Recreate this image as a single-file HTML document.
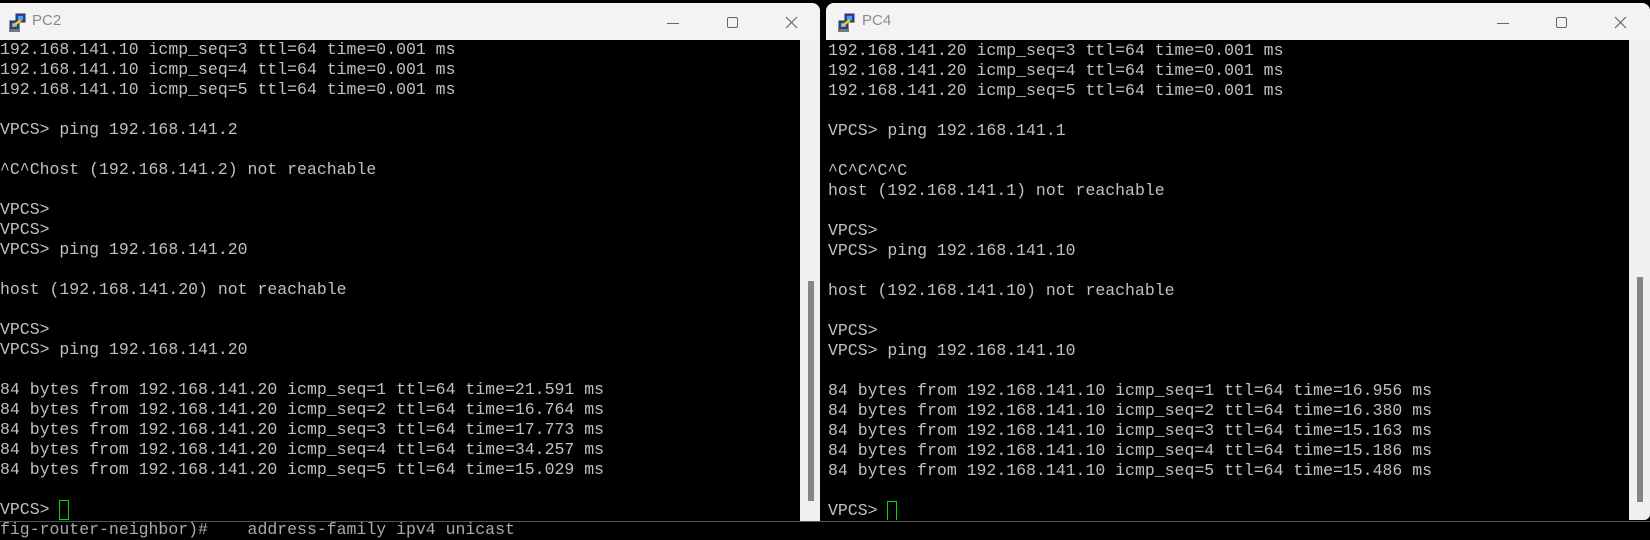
<!DOCTYPE html>
<html><head><meta charset="utf-8"><style>
*{margin:0;padding:0;box-sizing:border-box}
body{width:1650px;height:527px;background:#000;position:relative;overflow:hidden;font-family:"Liberation Mono",monospace}
.win{position:absolute;background:#f0f0f0;overflow:hidden}
.title{position:absolute;left:0;top:0;right:0;height:37px;background:#f3f3f3}
.title .t{position:absolute;left:32px;top:9px;font:15px "Liberation Sans",sans-serif;color:#8a8a8a}
.term{position:absolute;left:0;top:37px;background:#000;overflow:hidden}
pre{font-family:"Liberation Mono",monospace;font-size:16.5px;line-height:20px;color:#c0c0c0;white-space:pre;position:absolute;left:0;top:0}
.thumb{position:absolute;background:#858585;width:6px}
.cur{display:inline-block;width:10px;height:20px;border:1.5px solid #00e000;vertical-align:top}
.ctl{position:absolute;top:12px}
</style></head><body>
<div style="position:absolute;left:0;top:521px;width:1650px;height:1px;background:#555"></div>
<pre style="top:520px;left:0;color:#aaa">fig-router-neighbor)#    address-family ipv4 unicast</pre>

<div class="win" style="left:0;top:3px;width:820px;height:518px;border-top-right-radius:8px">
 <div class="title">
  <svg style="position:absolute;left:7px;top:10px" width="20" height="20" viewBox="0 0 20 20"><rect x="9" y="1" width="9" height="8" fill="#2040c0" stroke="#333"/><rect x="11" y="3" width="5" height="4" fill="#40a0ff"/><rect x="3" y="8" width="9" height="8" fill="#2040c0" stroke="#333"/><rect x="5" y="10" width="5" height="4" fill="#40a0ff"/><rect x="2" y="16" width="11" height="3" fill="#777"/><path d="M6 13 L14 7" stroke="#f0d000" stroke-width="2.5"/></svg>
  <div class="t">PC2</div>
  <div class="ctl" style="left:667px;top:20px;width:12px;height:1px;background:#666"></div>
  <div class="ctl" style="left:727px;top:14px;width:11px;height:11px;border:1px solid #666;border-radius:2px"></div>
  <svg class="ctl" style="left:785px;top:13px" width="13" height="13"><path d="M1 1L12 12M12 1L1 12" stroke="#666" stroke-width="1.2"/></svg>
 </div>
 <div class="term" style="width:800px;height:481px">
<pre style="top:0">192.168.141.10 icmp_seq=3 ttl=64 time=0.001 ms
192.168.141.10 icmp_seq=4 ttl=64 time=0.001 ms
192.168.141.10 icmp_seq=5 ttl=64 time=0.001 ms

VPCS> ping 192.168.141.2

^C^Chost (192.168.141.2) not reachable

VPCS>
VPCS>
VPCS> ping 192.168.141.20

host (192.168.141.20) not reachable

VPCS>
VPCS> ping 192.168.141.20

84 bytes from 192.168.141.20 icmp_seq=1 ttl=64 time=21.591 ms
84 bytes from 192.168.141.20 icmp_seq=2 ttl=64 time=16.764 ms
84 bytes from 192.168.141.20 icmp_seq=3 ttl=64 time=17.773 ms
84 bytes from 192.168.141.20 icmp_seq=4 ttl=64 time=34.257 ms
84 bytes from 192.168.141.20 icmp_seq=5 ttl=64 time=15.029 ms

VPCS> <span class="cur"></span></pre>
 </div>
 <div class="thumb" style="left:808px;top:278px;height:220px"></div>
</div>

<div class="win" style="left:826px;top:3px;width:824px;height:517px;border-top-left-radius:8px;border-top-right-radius:8px;border-bottom-right-radius:6px">
 <div class="title">
  <svg style="position:absolute;left:10px;top:10px" width="20" height="20" viewBox="0 0 20 20"><rect x="9" y="1" width="9" height="8" fill="#2040c0" stroke="#333"/><rect x="11" y="3" width="5" height="4" fill="#40a0ff"/><rect x="3" y="8" width="9" height="8" fill="#2040c0" stroke="#333"/><rect x="5" y="10" width="5" height="4" fill="#40a0ff"/><rect x="2" y="16" width="11" height="3" fill="#777"/><path d="M6 13 L14 7" stroke="#f0d000" stroke-width="2.5"/></svg>
  <div class="t" style="left:36px">PC4</div>
  <div class="ctl" style="left:671px;top:20px;width:12px;height:1px;background:#666"></div>
  <div class="ctl" style="left:730px;top:14px;width:11px;height:11px;border:1px solid #666;border-radius:2px"></div>
  <svg class="ctl" style="left:788px;top:13px" width="13" height="13"><path d="M1 1L12 12M12 1L1 12" stroke="#666" stroke-width="1.2"/></svg>
 </div>
 <div class="term" style="width:803px;height:480px">
<pre style="top:1px;left:2px">192.168.141.20 icmp_seq=3 ttl=64 time=0.001 ms
192.168.141.20 icmp_seq=4 ttl=64 time=0.001 ms
192.168.141.20 icmp_seq=5 ttl=64 time=0.001 ms

VPCS> ping 192.168.141.1

^C^C^C^C
host (192.168.141.1) not reachable

VPCS>
VPCS> ping 192.168.141.10

host (192.168.141.10) not reachable

VPCS>
VPCS> ping 192.168.141.10

84 bytes from 192.168.141.10 icmp_seq=1 ttl=64 time=16.956 ms
84 bytes from 192.168.141.10 icmp_seq=2 ttl=64 time=16.380 ms
84 bytes from 192.168.141.10 icmp_seq=3 ttl=64 time=15.163 ms
84 bytes from 192.168.141.10 icmp_seq=4 ttl=64 time=15.186 ms
84 bytes from 192.168.141.10 icmp_seq=5 ttl=64 time=15.486 ms

VPCS> <span class="cur"></span></pre>
 </div>
 <div class="thumb" style="left:811px;top:274px;height:225px"></div>
</div>
</body></html>
